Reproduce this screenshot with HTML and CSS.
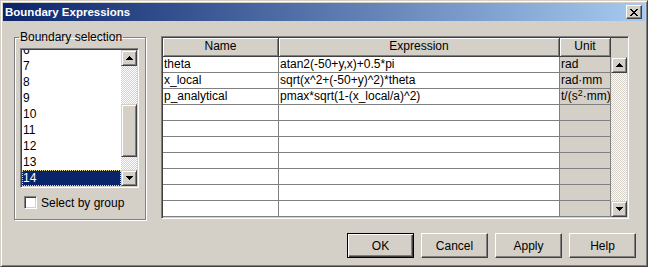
FILE: index.html
```html
<!DOCTYPE html>
<html>
<head>
<meta charset="utf-8">
<link rel="stylesheet" href="styles.css">
</head>
<body>
<div class="window">
  <div class="titlebar">
    <span class="title">Boundary Expressions</span>
    <div class="close"><svg width="8" height="7" viewBox="0 0 8 7"><path d="M0 0h2v1h-2z M6 0h2v1h-2z M1 1h2v1h-2z M5 1h2v1h-2z M2 2h4v1h-4z M3 3h2v1h-2z M2 4h4v1h-4z M1 5h2v1h-2z M5 5h2v1h-2z M0 6h2v1h-2z M6 6h2v1h-2z" fill="#000"/></svg></div>
  </div>
  <div class="content">
    <div class="main">
      <fieldset class="group">
        <legend>Boundary selection</legend>
        <div class="listbox">
          <div class="items">
            <div class="item">6</div>
            <div class="item">7</div>
            <div class="item">8</div>
            <div class="item">9</div>
            <div class="item">10</div>
            <div class="item">11</div>
            <div class="item">12</div>
            <div class="item">13</div>
            <div class="item sel">14</div>
          </div>
          <div class="vscroll">
            <div class="sbtn"><svg width="7" height="4" viewBox="0 0 7 4"><path d="M3 0h1v1h-1z M2 1h3v1h-3z M1 2h5v1h-5z M0 3h7v1h-7z" fill="#000"/></svg></div>
            <div class="track"><div class="thumb"></div></div>
            <div class="sbtn"><svg width="7" height="4" viewBox="0 0 7 4"><path d="M0 0h7v1h-7z M1 1h5v1h-5z M2 2h3v1h-3z M3 3h1v1h-1z" fill="#000"/></svg></div>
          </div>
        </div>
        <label class="check"><span class="cbox"></span><span>Select by group</span></label>
      </fieldset>
      <div class="table">
        <div class="sheet">
          <div class="hcell">Name</div><div class="hcell">Expression</div><div class="hcell">Unit</div>
          <div class="cell">theta</div><div class="cell">atan2(-50+y,x)+0.5*pi</div><div class="cell unit">rad</div>
          <div class="cell">x_local</div><div class="cell">sqrt(x^2+(-50+y)^2)*theta</div><div class="cell unit">rad·mm</div>
          <div class="cell">p_analytical</div><div class="cell">pmax*sqrt(1-(x_local/a)^2)</div><div class="cell unit">t/(s<sup>2</sup>·mm)</div>
          <div class="cell"></div><div class="cell"></div><div class="cell unit"></div>
          <div class="cell"></div><div class="cell"></div><div class="cell unit"></div>
          <div class="cell"></div><div class="cell"></div><div class="cell unit"></div>
          <div class="cell"></div><div class="cell"></div><div class="cell unit"></div>
          <div class="cell"></div><div class="cell"></div><div class="cell unit"></div>
          <div class="cell"></div><div class="cell"></div><div class="cell unit"></div>
          <div class="cell"></div><div class="cell"></div><div class="cell unit"></div>
        </div>
        <div class="side">
          <div class="corner"></div>
          <div class="vscroll tall">
            <div class="sbtn"><svg width="7" height="4" viewBox="0 0 7 4"><path d="M3 0h1v1h-1z M2 1h3v1h-3z M1 2h5v1h-5z M0 3h7v1h-7z" fill="#000"/></svg></div>
            <div class="track"></div>
            <div class="sbtn"><svg width="7" height="4" viewBox="0 0 7 4"><path d="M0 0h7v1h-7z M1 1h5v1h-5z M2 2h3v1h-3z M3 3h1v1h-1z" fill="#000"/></svg></div>
          </div>
        </div>
      </div>
    </div>
    <div class="buttons">
      <div class="btn default">OK</div>
      <div class="btn">Cancel</div>
      <div class="btn">Apply</div>
      <div class="btn">Help</div>
    </div>
  </div>
</div>
</body>
</html>
```
FILE: styles.css
```css
* { box-sizing: border-box; margin: 0; padding: 0; }
html, body { width: 648px; height: 267px; overflow: hidden; }
body {
  font-family: "Liberation Sans", Arial, sans-serif;
  font-size: 12px;
  color: #000;
  background: #d4d0c8;
}
.window {
  width: 648px;
  height: 267px;
  background: #d4d0c8;
  border: 1px solid;
  border-color: #d4d0c8 #404040 #404040 #d4d0c8;
  box-shadow: inset 1px 1px #fff, inset -1px -1px #808080;
  padding: 2px;
  display: flex;
  flex-direction: column;
}
.titlebar {
  height: 18px;
  flex: none;
  display: flex;
  align-items: center;
  padding-left: 2px;
  background: linear-gradient(to right, #0a246a, #a6caf0);
  color: #fff;
  font-weight: bold;
  font-size: 11.5px;
}
.close {
  margin-left: auto;
  margin-right: 3px;
  width: 16px;
  height: 14px;
  background: #d4d0c8;
  border: 1px solid;
  border-color: #fff #404040 #404040 #fff;
  box-shadow: inset -1px -1px #808080;
  display: flex;
  align-items: center;
  justify-content: center;
  padding-right: 1px;
}
.close svg { display: block; }
.content {
  flex: 1;
  display: flex;
  flex-direction: column;
  padding: 0 9px 0 11px;
}
.main {
  display: flex;
  align-items: flex-start;
  padding-top: 10px;
  gap: 15px;
}
.group {
  width: 132px;
  height: 189px;
  border: 1px solid #808080;
  box-shadow: inset 1px 1px #fff, 1px 1px #fff;
  padding: 4px 5px 0 5px;
  min-width: 0;
  flex: none;
}
.group legend {
  line-height: 13px;
  padding: 0 1px;
  margin-left: -1px;
}
.listbox {
  width: 119px;
  height: 140px;
  background: #fff;
  border: 1px solid;
  border-color: #808080 #fff #fff #808080;
  box-shadow: inset 1px 1px #404040, inset -1px -1px #d4d0c8;
  padding: 1px;
  display: flex;
}
.items {
  flex: 1;
  display: flex;
  flex-direction: column;
  justify-content: flex-end;
  overflow: hidden;
}
.item {
  height: 16px;
  line-height: 16px;
  padding-left: 1px;
  flex: none;
}
.item.sel {
  background: #0a246a;
  color: #fff;
  outline: 1px dotted #e8dca0;
  outline-offset: -1px;
}
.vscroll {
  width: 16px;
  flex: none;
  display: flex;
  flex-direction: column;
}
.sbtn {
  height: 16px;
  flex: none;
  background: #d4d0c8;
  border: 1px solid;
  border-color: #d4d0c8 #404040 #404040 #d4d0c8;
  box-shadow: inset 1px 1px #fff, inset -1px -1px #808080;
  display: flex;
  align-items: center;
  justify-content: center;
}
.sbtn svg { display: block; }
.track {
  flex: 1;
  background: repeating-conic-gradient(#fff 0% 25%, #d4d0c8 0% 50%) 0 0 / 2px 2px;
}
.thumb {
  margin-top: 38px;
  height: 53px;
  background: #d4d0c8;
  border: 1px solid;
  border-color: #d4d0c8 #404040 #404040 #d4d0c8;
  box-shadow: inset 1px 1px #fff, inset -1px -1px #808080;
}
.check {
  display: flex;
  align-items: center;
  gap: 4px;
  margin-top: 8px;
  margin-left: 4px;
  height: 13px;
}
.cbox {
  width: 13px;
  height: 13px;
  background: #fff;
  border: 1px solid;
  border-color: #808080 #fff #fff #808080;
  box-shadow: inset 1px 1px #404040, inset -1px -1px #d4d0c8;
}
.table {
  margin-top: 5px;
  width: 468px;
  height: 183px;
  border: 1px solid;
  border-color: #808080 #fff #fff #808080;
  box-shadow: inset 1px 1px #404040, inset -1px -1px #d4d0c8;
  padding: 1px;
  display: flex;
  flex: none;
}
.sheet {
  display: grid;
  grid-template-columns: 116px 281px 51px;
  grid-template-rows: 19px repeat(10, 16px);
  align-content: start;
  background: #fff;
  width: 448px;
}
.hcell {
  background: #d4d0c8;
  border-right: 1px solid #404040;
  border-bottom: 1px solid #404040;
  box-shadow: inset 1px 1px #fff, inset -1px -1px #808080;
  text-align: center;
  line-height: 17px;
}
.cell {
  border-right: 1px solid #808080;
  border-bottom: 1px solid #808080;
  line-height: 15px;
  padding-left: 1px;
  white-space: nowrap;
  overflow: hidden;
}
.cell.unit { background: #d4d0c8; }
.cell sup {
  font-size: 9px;
  line-height: 0;
  vertical-align: 4px;
}
.side {
  width: 16px;
  display: flex;
  flex-direction: column;
  background: #d4d0c8;
}
.corner { height: 19px; flex: none; }
.vscroll.tall { height: 160px; }
.buttons {
  margin-top: 13px;
  display: flex;
  justify-content: flex-end;
  gap: 7px;
}
.btn {
  width: 67px;
  height: 25px;
  background: #d4d0c8;
  border: 1px solid;
  border-color: #fff #404040 #404040 #fff;
  box-shadow: inset -1px -1px #808080;
  display: flex;
  align-items: center;
  justify-content: center;
}
.btn.default {
  border-color: #000;
  box-shadow: inset 1px 1px #fff, inset -1px -1px #404040, inset -2px -2px #808080;
}
```
